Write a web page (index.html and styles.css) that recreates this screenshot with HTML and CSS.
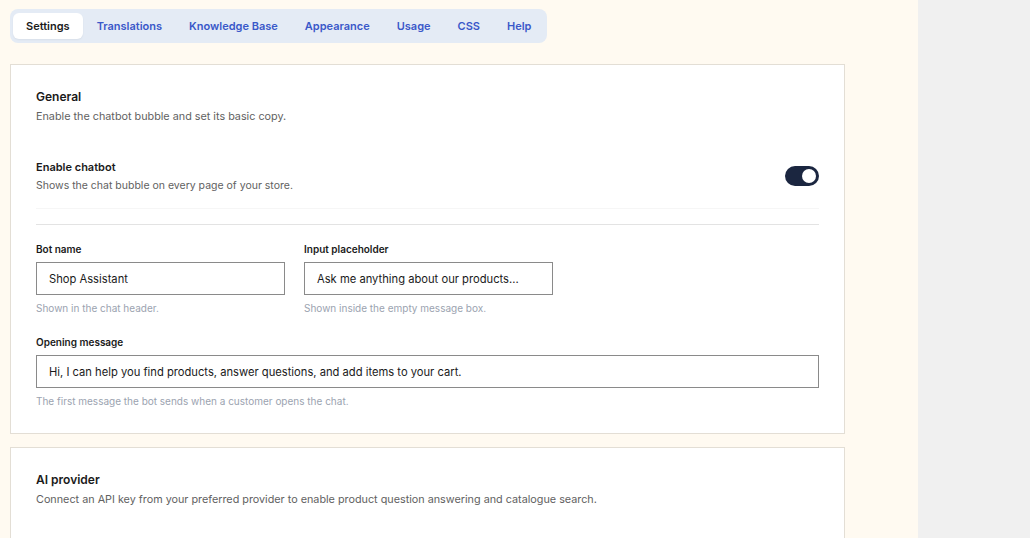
FILE: index.html
```html
<!DOCTYPE html>
<html lang="en">
<head>
    <meta charset="UTF-8">
    <meta name="viewport" content="width=device-width, initial-scale=1.0">
    <title>Chatbot Settings</title>
    <link rel="stylesheet" href="styles.css">
</head>
<body>
    <div class="layout">
        <main class="main">
            <nav class="tabs">
                <a class="tab active">Settings</a>
                <a class="tab">Translations</a>
                <a class="tab">Knowledge Base</a>
                <a class="tab">Appearance</a>
                <a class="tab">Usage</a>
                <a class="tab">CSS</a>
                <a class="tab">Help</a>
            </nav>

            <section class="card">
                <h2 class="card-title">General</h2>
                <p class="card-desc">Enable the chatbot bubble and set its basic copy.</p>

                <div class="setting-row">
                    <div>
                        <div class="setting-label">Enable chatbot</div>
                        <div class="setting-desc">Shows the chat bubble on every page of your store.</div>
                    </div>
                    <div class="toggle on"><span class="knob"></span></div>
                </div>

                <hr class="divider">

                <div class="field-grid">
                    <div class="field">
                        <label class="field-label">Bot name</label>
                        <div class="input">Shop Assistant</div>
                        <div class="field-help">Shown in the chat header.</div>
                    </div>
                    <div class="field">
                        <label class="field-label">Input placeholder</label>
                        <div class="input">Ask me anything about our products...</div>
                        <div class="field-help">Shown inside the empty message box.</div>
                    </div>
                </div>

                <div class="field">
                    <label class="field-label">Opening message</label>
                    <div class="input">Hi, I can help you find products, answer questions, and add items to your cart.</div>
                    <div class="field-help">The first message the bot sends when a customer opens the chat.</div>
                </div>
            </section>

            <section class="card card-tall">
                <h2 class="card-title">AI provider</h2>
                <p class="card-desc">Connect an API key from your preferred provider to enable product question answering and catalogue search.</p>
            </section>
        </main>
        <aside class="side"></aside>
    </div>
</body>
</html>
```

FILE: styles.css
```css
body {
    margin: 0;
    padding: 0;
    height: 100vh;
    overflow: hidden;
    font-family: 'Inter', 'Noto Sans', sans-serif;
    color: #1a1a1a;
}

.layout {
    display: flex;
    height: 100%;
}

.main {
    width: 918px;
    flex-shrink: 0;
    background: #fffaf1;
    padding: 9px 73px 0 10px;
    box-sizing: border-box;
    display: flex;
    flex-direction: column;
    gap: 13px;
    overflow: hidden;
}

.side {
    flex: 1;
    background: #f0f0f0;
}

/* tabs */
.tabs {
    display: flex;
    gap: 1px;
    align-self: flex-start;
    width: 537px;
    box-sizing: border-box;
    padding: 4px 3px;
    background: #e4ebf5;
    border-radius: 8px;
    margin-bottom: 8px;
}

.tab {
    padding: 0 13px;
    height: 26px;
    line-height: 27px;
    font-size: 11px;
    font-weight: 600;
    color: #3a58c9;
    border-radius: 6px;
    white-space: nowrap;
    cursor: pointer;
}

.tab.active {
    background: #fff;
    color: #1a1a1a;
    box-shadow: 0 1px 2px rgba(0,0,0,0.05);
}

/* cards */
.card {
    flex-shrink: 0;
    background: #fff;
    border: 1px solid #e3ded5;
    padding: 24px 25px 25px;
}

.card-tall {
    padding-bottom: 80px;
}

.card-title {
    margin: 0;
    font-size: 12px;
    line-height: 16px;
    font-weight: 600;
}

.card-desc {
    margin: 4px 0 0;
    font-size: 10.8px;
    line-height: 16px;
    color: #616161;
}

.setting-row {
    display: flex;
    justify-content: space-between;
    align-items: center;
    margin-top: 34px;
    padding-bottom: 14px;
    border-bottom: 1px solid #f6f6f6;
}

.setting-label {
    font-size: 11px;
    line-height: 16px;
    font-weight: 600;
}

.setting-desc {
    margin-top: 3px;
    font-size: 10.5px;
    line-height: 16px;
    color: #616161;
}

.toggle {
    width: 34px;
    height: 20px;
    border-radius: 10px;
    background: #d4d4d4;
    box-sizing: border-box;
    padding: 3px;
    display: flex;
    margin-bottom: 1px;
}

.toggle.on {
    background: #1b2640;
    justify-content: flex-end;
}

.knob {
    width: 14px;
    height: 14px;
    border-radius: 50%;
    background: #fff;
}

.divider {
    border: 0;
    border-top: 1px solid #e3e3e3;
    margin: 15px 0 17px;
}

.field-grid {
    display: grid;
    grid-template-columns: 249px 249px;
    gap: 19px;
    margin-bottom: 20px;
}

.field-label {
    display: block;
    font-size: 10px;
    line-height: 14px;
    font-weight: 600;
    margin-bottom: 6px;
}

.input {
    height: 33px;
    box-sizing: border-box;
    border: 1.5px solid #8a8a8a;
    padding: 2px 12px 0;
    font-size: 11.2px;
    line-height: 28px;
    color: #1a1a1a;
    white-space: nowrap;
    overflow: hidden;
}

.field-help {
    margin-top: 6px;
    font-size: 10px;
    line-height: 14px;
    color: #9ba3b0;
}
```
